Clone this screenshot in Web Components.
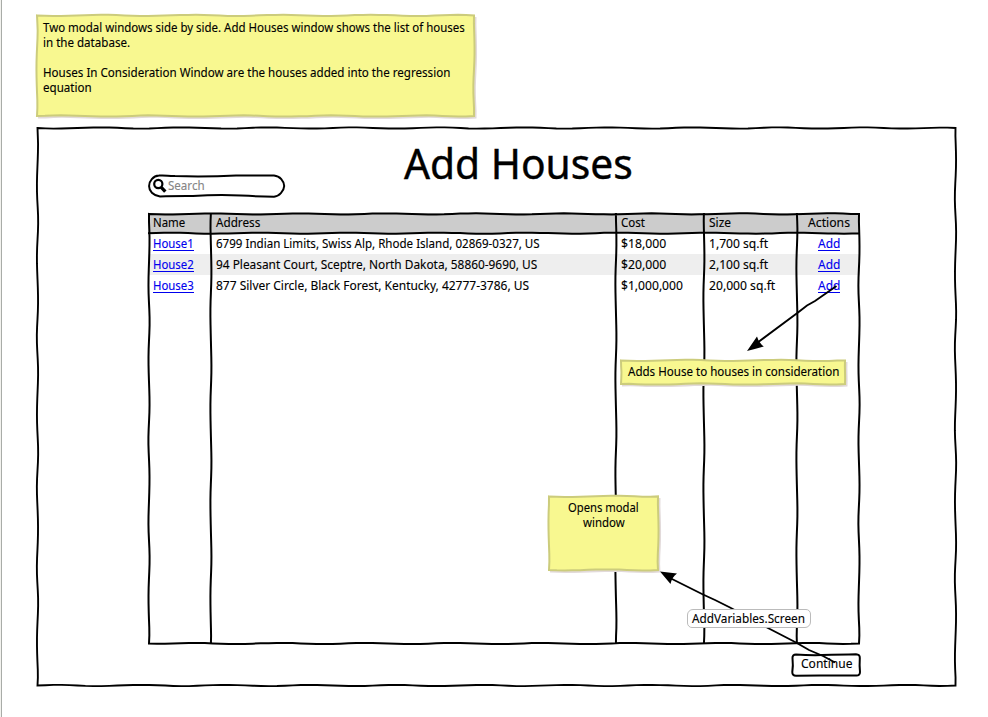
<!DOCTYPE html>
<html lang="en"><head><meta charset="utf-8"><title>Add Houses</title>
<style>html,body{margin:0;background:#fff}body{overflow:hidden}</style></head>
<body>
<mock-canvas>
  <sticky-note style="left:35px;top:14px;width:439px;height:103px;--pad:6px 7px">
    <fit-text w="422">Two modal windows side by side. Add Houses window shows the list of houses</fit-text>
    <fit-text w="87" style="margin-bottom:15px">in the database.</fit-text>
    <fit-text w="407">Houses In Consideration Window are the houses added into the regression</fit-text>
    <fit-text w="49">equation</fit-text>
  </sticky-note>
  <mock-window>
    <fit-text slot="title" w="229" size="42">Add Houses</fit-text>
    <search-field slot="search"></search-field>
    <house-table slot="table"></house-table>
    <mock-button slot="action"><fit-text w="51">Continue</fit-text></mock-button>
  </mock-window>
  <sticky-note style="left:619px;top:359px;width:226px;height:26px;--pad:5px 8px"><fit-text w="211">Adds House to houses in consideration</fit-text></sticky-note>
  <sticky-note style="left:547px;top:495px;width:111px;height:76px;--pad:5px 5px;--align:center"><fit-text w="71">Opens modal</fit-text><fit-text w="42">window</fit-text></sticky-note>
  <flow-arrows></flow-arrows>
  <link-label><fit-text w="113">AddVariables.Screen</fit-text></link-label>
</mock-canvas>
<script>
/* Hand-drawn edge: points along a line with a small sideways wave. */
function edge(x1,y1,x2,y2,amp=.7,period=86,phase=0){
  const len=Math.hypot(x2-x1,y2-y1),n=Math.max(4,Math.round(len/8)),ux=(x2-x1)/len,uy=(y2-y1)/len,out=[];
  for(let i=0;i<=n;i++){
    const t=len*i/n,fade=Math.min(1,t/12,(len-t)/12);
    const k=amp*fade*(Math.sin(phase+t/period*2*Math.PI)+.12*Math.sin(phase*2+t/47*2*Math.PI));
    out.push((x1+ux*t-uy*k).toFixed(2)+' '+(y1+uy*t+ux*k).toFixed(2));
  }
  return out;
}
const line=(...a)=>'M'+edge(...a).join('L');
function box(x1,y1,x2,y2,amp,period,p=0){
  return 'M'+[...edge(x1,y1,x2,y1,amp,period,p),...edge(x2,y1,x2,y2,amp,period*.9,p+2),...edge(x2,y2,x1,y2,amp,period,p+4),...edge(x1,y2,x1,y1,amp,period*.9,p+1)].join('L')+'Z';
}
const define=(name,html,setup)=>customElements.define(name,class extends HTMLElement{
  connectedCallback(){
    if(this.shadowRoot)return;
    this.attachShadow({mode:'open'}).innerHTML=html;
    if(setup)setup.call(this,this.shadowRoot);
  }
});

define('mock-canvas',`<style>:host{display:block;position:relative;box-sizing:border-box;width:988px;height:717px;overflow:hidden;padding:127px 0 0 34px;border-left:1px solid #f2f2ee;font:12.5px/15px "Noto Sans","Open Sans",sans-serif;color:#000;-webkit-text-stroke:.12px}
:host::before{content:"";position:absolute;left:0;top:0;bottom:0;width:1px;background:#a9aca8}</style><slot></slot>`);

define('fit-text',`<style>:host{display:block;white-space:nowrap;height:15px}span{display:inline-block;transform-origin:0 50%;white-space:nowrap}</style><span><slot></slot></span>`,function(r){
  const s=r.querySelector('span'),w=+this.getAttribute('w'),size=this.getAttribute('size');
  if(size){s.style.font=`${size}px/50px "Noto Sans","Open Sans",sans-serif`;s.style.webkitTextStroke='.4px'}
  this.style.width=w+'px';
  s.style.transform=`scaleX(${w/s.offsetWidth})`;
});

define('sticky-note',`<style>:host{display:block;position:absolute;box-sizing:border-box}
svg{position:absolute;left:0;top:0;overflow:visible}div{position:relative;display:flex;flex-direction:column;align-items:var(--align,flex-start);padding:var(--pad)}</style><svg width="1" height="1"><path class="s" fill="#e2dada"/><path class="f" fill="#f8f890" stroke="#cccc7c" stroke-width="2"/></svg><div><slot></slot></div>`,function(r){
  const w=this.offsetWidth,h=this.offsetHeight;
  r.querySelector('.f').setAttribute('d',box(1,1.4,w-1,h-1,.6,90,.2));
  r.querySelector('.s').setAttribute('d',box(2,3,w+1.5,h+1.5,.6,90,.2));
});

define('mock-window',`<style>:host{display:block;position:relative;box-sizing:border-box;width:920px;height:560px;margin-left:1px}
svg{position:absolute;left:0;top:0;overflow:visible}
.body{display:grid;grid-template-columns:256px 1fr;grid-template-rows:86px 431px auto;padding:0 95px 0 112px;position:relative}
.search{padding-top:47px}.title{padding-top:11px}.table{grid-column:1/3}.action{grid-column:1/3;display:flex;justify-content:flex-end;padding-top:9px}</style>
<svg width="920" height="560"><path fill="#fff" stroke="#000" stroke-width="1.9"/></svg>
<div class="body"><div class="search"><slot name="search"></slot></div><div class="title"><slot name="title"></slot></div><div class="table"><slot name="table"></slot></div><div class="action"><slot name="action"></slot></div></div>`,function(r){
  r.querySelector('path').setAttribute('d',box(1.5,1,919.5,558.5,.6,85,.2));
});

define('search-field',`<style>:host{display:flex;align-items:center;box-sizing:border-box;position:relative;width:138px;height:24px;padding:0 0 2px 20px;color:#858585}
svg{position:absolute;left:0;top:0}</style>
<svg width="138" height="24" fill="none" stroke="#000" stroke-width="2"><path d="M11 1.6Q14 1 27 2.1L50 2.4Q70 2.4 88 1.5Q112 1.3 126 1.5C132 2 136 7 136.200 12C136 17 131 22.500 126 22.700Q112 22.500 93 21.600Q70 20.400 45 22.100Q25 22 12 22.500C5 21.500 1 17 1.100 12C1.100 7 5 2 11 1.600Z"/><circle cx="10.300" cy="10" r="4.100" stroke-width="2.200"/><path d="M13.300 13.300l4 4.300" stroke-width="3.300"/></svg><fit-text w="37">Search</fit-text>`);

define('house-table',`<style>:host{display:block;position:relative;width:712px;height:431px}
.row{display:grid;grid-template-columns:62px 405px 88px 93px 63px;height:21px;align-items:center;padding-left:1px;box-sizing:border-box}
.row>*{margin-left:5px}.row>:first-child{margin-left:4px}.row>:last-child{justify-self:center;margin-left:1px}
.row>a:last-child{margin-left:0}
.head{background:#ccc;height:20px;padding-bottom:1px}.alt{background:#eee}
a{color:#0000ee;height:15px;justify-self:start;background:linear-gradient(#0000ee,#0000ee) 0 14px/100% 1px no-repeat}
svg{position:absolute;left:0;top:0;overflow:visible}</style><div id="rows"></div><svg width="712" height="431"><path fill="none" stroke="#000" stroke-width="2"/></svg>`,function(r){
  const t=(s,w)=>`<fit-text w="${w}">${s}</fit-text>`,a=(s,w)=>`<a>${t(s,w)}</a>`;
  r.querySelector('#rows').innerHTML=`
  <div class="row head">${t('Name',32)+t('Address',44)+t('Cost',24)+t('Size',22)+t('Actions',42)}</div>
  <div class="row">${a('House1',41)+t('6799 Indian Limits, Swiss Alp, Rhode Island, 02869-0327, US',324)+t('$18,000',45)+t('1,700 sq.ft',59)+a('Add',22)}</div>
  <div class="row alt">${a('House2',41)+t('94 Pleasant Court, Sceptre, North Dakota, 58860-9690, US',321)+t('$20,000',45)+t('2,100 sq.ft',59)+a('Add',22)}</div>
  <div class="row">${a('House3',41)+t('877 Silver Circle, Black Forest, Kentucky, 42777-3786, US',313)+t('$1,000,000',62)+t('20,000 sq.ft',66)+a('Add',22)}</div>`;
  let d=box(1,.9,711,430.5,.55,88,.2)+line(0,20.2,712,20.2,.5,90,3.3);
  [[62.900,1],[467.900,3],[555.900,2],[648.900,4]].forEach(([x,p])=>d+=line(x,0,x,431,.5,95,p));
  r.querySelector('path').setAttribute('d',d);
});

define('mock-button',`<style>:host{display:flex;justify-content:center;box-sizing:border-box;position:relative;width:70px;height:24px;padding-top:3px}
svg{position:absolute;left:0;top:0}::slotted(*){position:relative}</style><svg width="70" height="24"><path d="M5 1.500Q17 2.400 31 2.100Q51 1.400 65 1.200Q69 1.400 68.800 5Q68.300 13 69 19Q69 22.800 65 22.500Q50 22.400 37 22.500Q19 22.400 5 22.700Q1.200 22.700 1.300 19Q2.300 13 1.500 5Q1.300 1.600 5 1.500Z" fill="#fff" stroke="#000" stroke-width="2"/></svg><slot></slot>`);

define('flow-arrows',`<style>:host{position:absolute;inset:0;pointer-events:none}</style><svg width="987" height="717" viewBox="1 0 987 717"><g fill="none" stroke="#000" stroke-width="1.9"><path d="M836.500 286L815 301L807 305.500L798 312.500L757 343"/><path d="M835 662.500L823 656L809 650L796 642.500L766 627L730 607.500L715 600L703 594.500L668 577"/></g><path d="M747 351L757 336.500Q759 343 763.800 346.500Q755 349 747 351Z"/><path d="M660 571.500L677 573.500Q672 577 670.500 584Z"/></svg>`);

define('link-label',`<style>:host{position:absolute;left:686px;top:609px;box-sizing:border-box;width:124px;height:19px;padding:1px 4px;background:#fff;border:1px solid #bbb;border-radius:6px 5px 6px 5px}</style><slot></slot>`);
</script>
</body></html>
